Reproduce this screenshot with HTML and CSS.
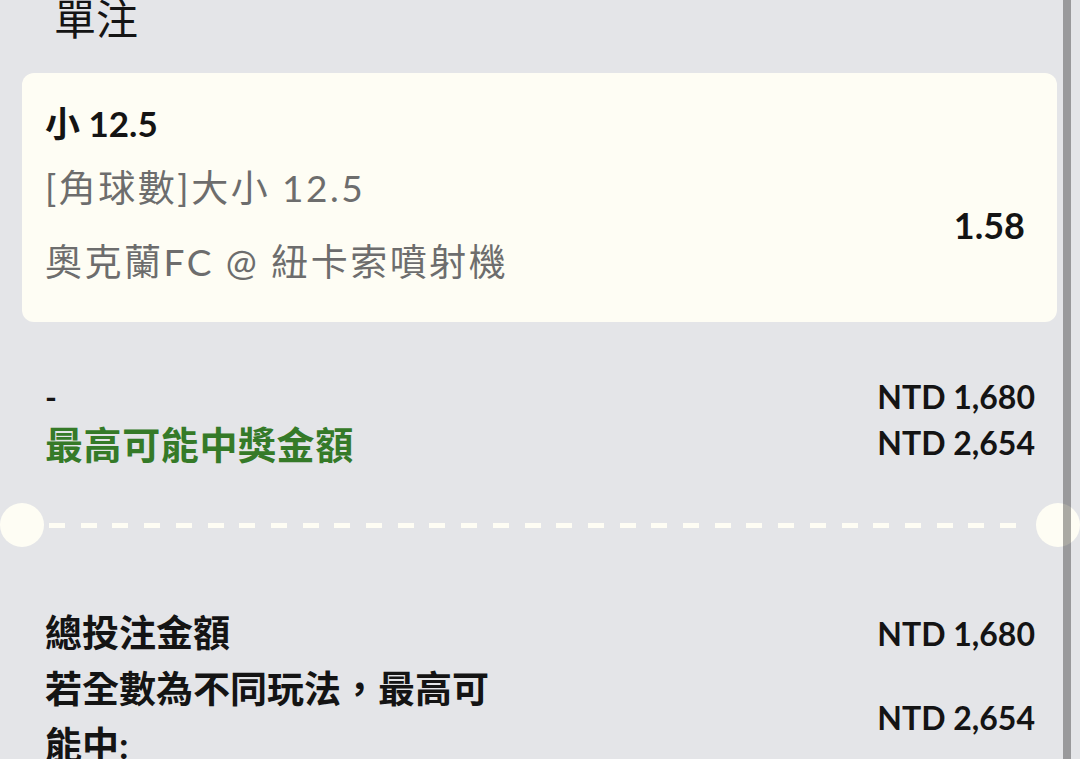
FILE: index.html
```html
<!DOCTYPE html>
<html lang="zh-Hant">
<head>
    <meta charset="UTF-8">
    <meta name="viewport" content="width=device-width, initial-scale=1.0">
    <title>單注</title>
    <link rel="stylesheet" href="styles.css">
</head>
<body>
    <div class="page">
        <h2 class="title">單注</h2>
        <div class="bet-card">
            <div class="bet-pick">小 12.5</div>
            <div class="bet-body">
                <div class="bet-info">
                    <div class="bet-market">[角球數]大小 12.5</div>
                    <div class="bet-match">奧克蘭FC @ 紐卡索噴射機</div>
                </div>
                <div class="bet-odds">1.58</div>
            </div>
        </div>
        <div class="summary">
            <div class="sum-row">
                <div class="sum-label">-</div>
                <div class="sum-value">NTD 1,680</div>
            </div>
            <div class="sum-row">
                <div class="sum-label green">最高可能中獎金額</div>
                <div class="sum-value">NTD 2,654</div>
            </div>
        </div>
        <div class="divider">
            <span class="notch"></span>
            <span class="dash"></span>
            <span class="notch"></span>
        </div>
        <div class="totals">
            <div class="total-row">
                <div class="total-label">總投注金額</div>
                <div class="sum-value">NTD 1,680</div>
            </div>
            <div class="total-row">
                <div class="total-label">若全數為不同玩法，最高可能中:</div>
                <div class="sum-value">NTD 2,654</div>
            </div>
        </div>
    </div>
    <div class="scrollbar"></div>
</body>
</html>
```

FILE: styles.css
```css
body {
    margin: 0;
    background-color: #e4e5e8;
    font-family: Lato, "Noto Sans CJK TC", sans-serif;
    color: #141414;
    overflow: hidden;
}
.page {
    padding: 0 23px 0 22px;
}
.title {
    margin: -11px 0 0 32px;
    font-size: 42px;
    font-weight: 400;
    line-height: 60px;
}
.bet-card {
    margin-top: 24px;
    padding: 25px 32px 35px 23px;
    background-color: #fefdf4;
    border-radius: 12px;
}
.bet-pick {
    font-size: 35px;
    font-weight: 700;
    line-height: 50px;
    margin-bottom: 15px;
}
.bet-body {
    display: flex;
    justify-content: space-between;
    align-items: center;
}
.bet-market,
.bet-match {
    font-size: 37px;
    line-height: 50px;
    letter-spacing: 2.5px;
    color: #6d6d6d;
}
.bet-market {
    margin-bottom: 24px;
}
.bet-odds {
    font-size: 36px;
    font-weight: 700;
}
.summary {
    margin-top: 51px;
    padding: 0 22px 0 23px;
}
.sum-row {
    display: flex;
    justify-content: space-between;
    align-items: center;
    height: 46px;
}
.sum-label {
    font-size: 32px;
    font-weight: 700;
}
.sum-label.green {
    font-size: 38px;
    letter-spacing: 0.6px;
    color: #357a28;
}
.sum-value {
    font-size: 32px;
    font-weight: 700;
}
.divider {
    display: flex;
    align-items: center;
    margin: 38px -23px 0 -22px;
}
.notch {
    width: 44px;
    height: 44px;
    border-radius: 50%;
    background-color: #fefdf4;
}
.dash {
    flex: 1;
    height: 5px;
    margin: 0 5px;
    background: repeating-linear-gradient(to right, #fefdf4 0 16px, transparent 16px 31.7px);
}
.totals {
    margin-top: 58px;
    padding: 0 22px 0 23px;
}
.total-row {
    display: flex;
    justify-content: space-between;
    align-items: center;
}
.total-label {
    width: 470px;
    font-size: 37px;
    font-weight: 700;
    line-height: 56px;
}
.scrollbar {
    position: fixed;
    top: 0;
    bottom: 0;
    right: 9px;
    width: 8px;
    background-color: rgba(0, 0, 0, 0.33);
}
```
